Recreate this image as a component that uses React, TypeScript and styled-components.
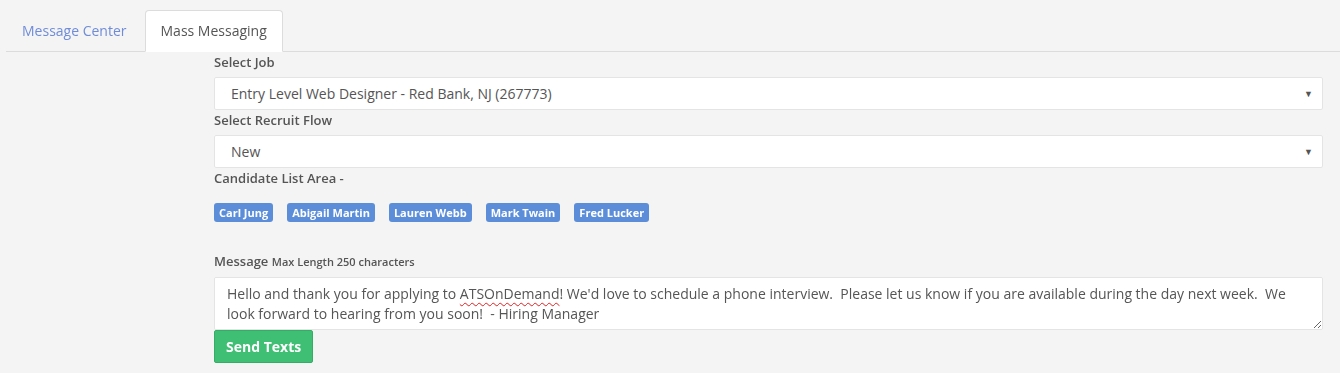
import styled, { createGlobalStyle } from 'styled-components';

const Global = createGlobalStyle`
  body {
    margin: 0;
    background: #f4f4f4;
    font-family: "Open Sans", "Liberation Sans", Arial, sans-serif;
    color: #555;
  }
`

const Page = styled.div`
  padding-top: 10px;
`

const Tabs = styled.ul`
  display: flex;
  list-style: none;
  margin: 0 0 0 6px;
  padding: 0;
  border-bottom: 1px solid #dcdcdc;
`

const Tab = styled.li<{ $active?: boolean }>`
  margin-right: 2px;
  margin-bottom: -1px;
  padding: 10px 15px;
  font-size: 14px;
  line-height: 20px;
  border: 1px solid ${p => (p.$active ? '#dcdcdc' : 'transparent')};
  border-bottom-color: ${p => (p.$active ? '#fff' : 'transparent')};
  border-radius: 4px 4px 0 0;
  background: ${p => (p.$active ? '#fff' : 'transparent')};
  color: ${p => (p.$active ? '#555' : '#6f8cd8')};
  cursor: pointer;
`

const Content = styled.div`
  padding: 0 17px 10px 214px;
`

const Label = styled.div`
  font-size: 13px;
  font-weight: 600;
  line-height: 20px;
  margin-bottom: 5px;
  color: #555;

  small {
    font-size: 11px;
    font-weight: 600;
  }
`

const SelectWrap = styled.div`
  position: relative;

  &::after {
    content: '▼';
    position: absolute;
    right: 10px;
    top: 10px;
    font-size: 9px;
    color: #555;
    pointer-events: none;
  }
`

const Select = styled.select`
  appearance: none;
  display: block;
  width: 100%;
  height: 33px;
  padding: 0 16px;
  border: 1px solid #e4e4e4;
  border-radius: 2px;
  background: #fff;
  font-family: inherit;
  font-size: 14px;
  color: #555;
  outline: none;
`

const Badges = styled.div`
  display: flex;
  gap: 14px;
  padding: 10px 0 29px;
`

const Badge = styled.span`
  display: inline-block;
  height: 19px;
  line-height: 19px;
  padding: 0 5px;
  border-radius: 3px;
  background: #5b8dd9;
  color: #fff;
  font-size: 11px;
  font-weight: 700;
  white-space: nowrap;
`

const TextBox = styled.div`
  box-sizing: border-box;
  height: 53px;
  padding: 6px 12px;
  border: 1px solid #e4e4e4;
  border-radius: 2px;
  background: #fff;
  font-size: 14px;
  line-height: 20px;
  color: #555;
  white-space: pre-wrap;
  overflow: auto;
  resize: vertical;
`

const Misspelled = styled.span`
  text-decoration: underline wavy #e02020;
  text-decoration-thickness: 1px;
  text-underline-offset: 3px;
`

const SendButton = styled.button`
  display: block;
  height: 33px;
  padding: 0 11px;
  border: 1px solid #36ad66;
  border-radius: 2px;
  background: #3fbf73;
  color: #fff;
  font-family: inherit;
  font-size: 14px;
  font-weight: 700;
  cursor: pointer;
`

const candidates = ['Carl Jung', 'Abigail Martin', 'Lauren Webb', 'Mark Twain', 'Fred Lucker']

const App = (): JSX.Element => {
  return (
    <Page>
      <Global />
      <Tabs>
        <Tab>Message Center</Tab>
        <Tab $active>Mass Messaging</Tab>
      </Tabs>
      <Content>
        <Label>Select Job</Label>
        <SelectWrap>
          <Select defaultValue="267773">
            <option value="267773">Entry Level Web Designer - Red Bank, NJ (267773)</option>
          </Select>
        </SelectWrap>
        <Label>Select Recruit Flow</Label>
        <SelectWrap>
          <Select defaultValue="new">
            <option value="new">New</option>
          </Select>
        </SelectWrap>
        <Label>Candidate List Area -</Label>
        <Badges>
          {candidates.map(c => (
            <Badge key={c}>{c}</Badge>
          ))}
        </Badges>
        <Label>
          Message <small>Max Length 250 characters</small>
        </Label>
        <TextBox>
          Hello and thank you for applying to <Misspelled>ATSOnDemand</Misspelled>! We'd love to schedule a phone interview.  Please let us know if you are available during the day next week.  We look forward to hearing from you soon!  - Hiring Manager
        </TextBox>
        <SendButton>Send Texts</SendButton>
      </Content>
    </Page>
  );
}

export default App;
